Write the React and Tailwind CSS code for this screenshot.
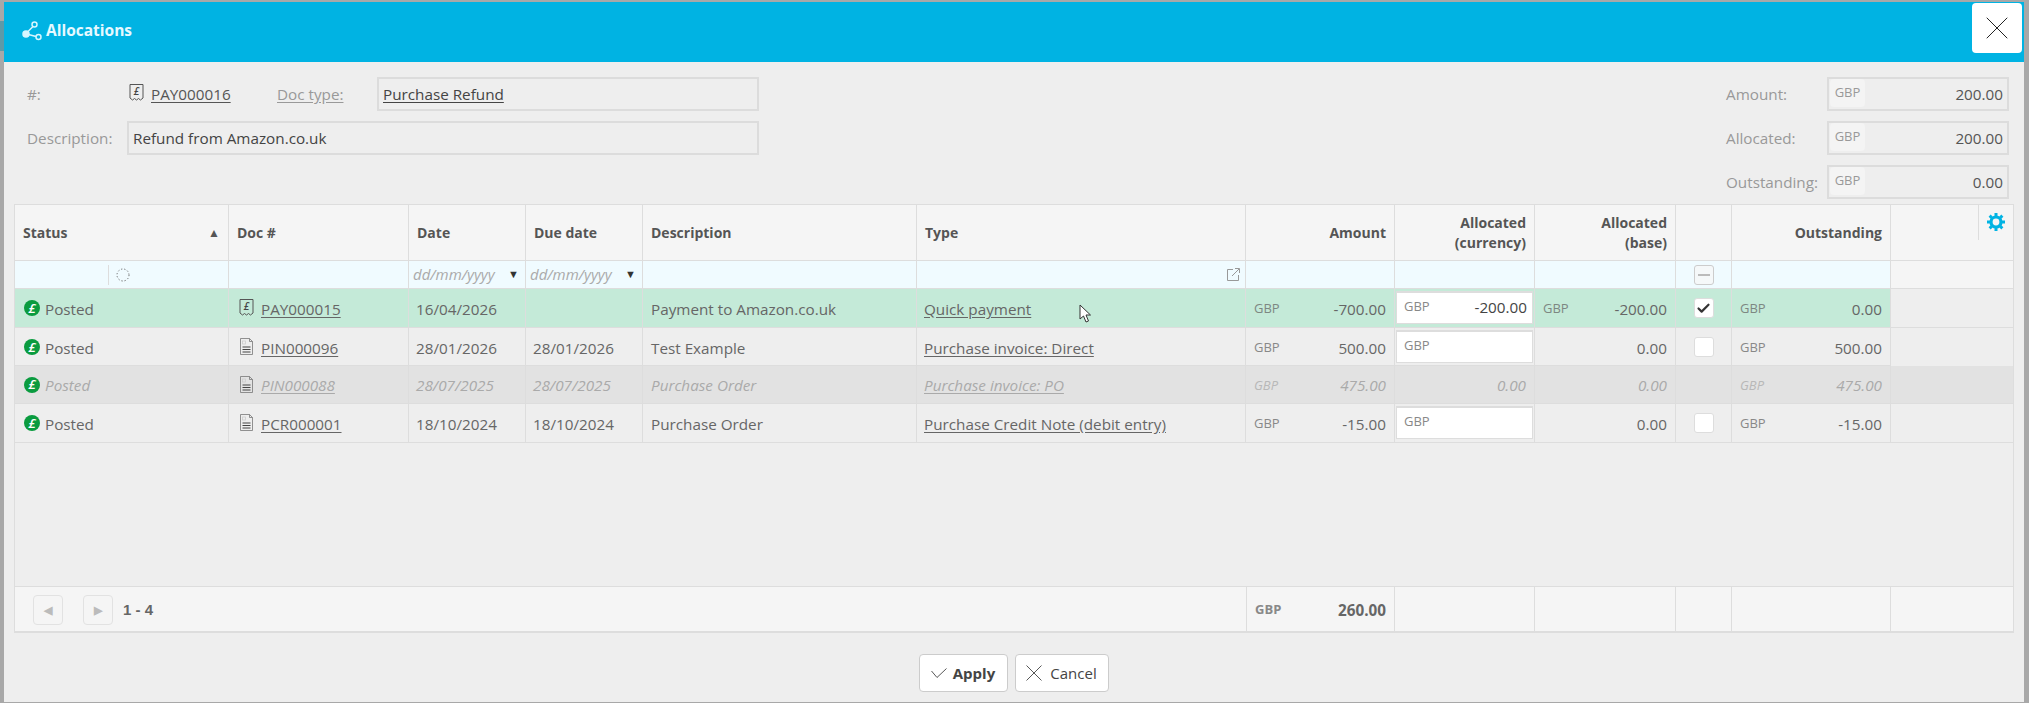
import { X, Check } from "lucide-react";

const COLS =
  "grid grid-cols-[214px_180px_117px_117px_274px_329px_149px_140px_141px_56px_159px_1fr]";

const ROWS = [
  {
    doc: "PAY000015",
    icon: "receipt",
    date: "16/04/2026",
    due: "",
    desc: "Payment to Amazon.co.uk",
    type: "Quick payment",
    amount: "-700.00",
    allocCur: "-200.00",
    allocBase: "-200.00",
    baseGbp: true,
    checked: true,
    outstanding: "0.00",
    state: "selected",
    height: "h-[39px]",
  },
  {
    doc: "PIN000096",
    icon: "doc",
    date: "28/01/2026",
    due: "28/01/2026",
    desc: "Test Example",
    type: "Purchase invoice: Direct",
    amount: "500.00",
    allocCur: "",
    allocBase: "0.00",
    outstanding: "500.00",
    height: "h-[38px]",
  },
  {
    doc: "PIN000088",
    icon: "doc",
    date: "28/07/2025",
    due: "28/07/2025",
    desc: "Purchase Order",
    type: "Purchase invoice: PO",
    amount: "475.00",
    allocCur: "0.00",
    allocBase: "0.00",
    outstanding: "475.00",
    state: "disabled",
    height: "h-[38px]",
  },
  {
    doc: "PCR000001",
    icon: "doc",
    date: "18/10/2024",
    due: "18/10/2024",
    desc: "Purchase Order",
    type: "Purchase Credit Note (debit entry)",
    amount: "-15.00",
    allocCur: "",
    allocBase: "0.00",
    outstanding: "-15.00",
    height: "h-[39px]",
  },
];

function ReceiptIcon() {
  return (
    <svg width="15" height="17" viewBox="0 0 15 17" className="shrink-0 mb-[3px]" fill="none" stroke="#555">
      <path d="M1 .5h13v13.500l-2.500 2-2-1.500-2 1.500-2-1.500-2 1.500-2.500-2z" />
      <text x="7.500" y="11" fontSize="10" fontStyle="italic" fontWeight="600" fill="#444" stroke="none" textAnchor="middle" fontFamily="Open Sans">
        £
      </text>
    </svg>
  );
}

function DocIcon() {
  return (
    <svg width="15" height="17" viewBox="0 0 15 17" className="shrink-0 mb-[3px]" fill="none" stroke="#777" strokeWidth="0.8">
      <path d="M1.500.5h9l3 3v13h-12z" />
      <path d="M10.500.5v3h3" />
      <rect x="3.500" y="3" width="3" height="3" stroke="#ccc" />
      <path d="M3.500 9h8M3.500 11.500h8M3.500 14h8" stroke="#444" strokeWidth="1" />
    </svg>
  );
}

function GearIcon() {
  const teeth = [0, 45, 90, 135];
  return (
    <svg width="18" height="18" viewBox="0 0 18 18" fill="none" stroke="#00b3e3">
      <circle cx="9" cy="9" r="5" strokeWidth="3.200" />
      {teeth.map((deg) => (
        <path key={deg} d="M9 0v18" strokeWidth="3" strokeDasharray="3 12" transform={`rotate(${deg} 9 9)`} />
      ))}
    </svg>
  );
}

function PoundBadge() {
  return (
    <span className="w-[16px] h-[16px] rounded-full bg-[#0a9b3f] text-white flex items-center justify-center text-[13px] leading-none font-semibold shrink-0 mb-[2px]">
      <span className="italic">£</span>
    </span>
  );
}

function Field({ className, children }) {
  return (
    <div className={`h-[34px] border-2 border-[#dcdcdc] flex items-center px-[4px] text-[#444] ${className}`}>
      {children}
    </div>
  );
}

function Money({ label, value }) {
  return (
    <div className="flex items-center h-[34px]">
      <span className="w-[101px] text-[#999]">{label}</span>
      <div className="w-[182px] h-[34px] border-2 border-[#dcdcdc] flex items-center justify-between pl-[1px] pr-[4px] text-[#555]">
        <span className="w-[35px] h-[28px] rounded-[4px] bg-[#f4f4f4] text-[13px] text-[#999] flex items-center justify-center mb-[2px]">
          GBP
        </span>
        {value}
      </div>
    </div>
  );
}

function Cell({ className = "", pad = "px-[8px]", children }) {
  return (
    <div className={`border-r border-[#dddddd] flex items-center min-w-0 ${pad} ${className}`}>{children}</div>
  );
}

function HeadCell({ className = "", children }) {
  return <Cell className={`font-bold text-[14px] text-[#555] leading-[20px] ${className}`}>{children}</Cell>;
}

function GbpCell({ value }) {
  return (
    <Cell className="justify-between">
      <span className="text-[13px] opacity-75">GBP</span>
      {value}
    </Cell>
  );
}

function DateFilter() {
  return (
    <Cell className="justify-between" pad="pl-[4px] pr-[6px]">
      <span className="italic text-[#aaa] text-[15px]">dd/mm/yyyy</span>
      <span className="text-[#333] text-[11px]">▼</span>
    </Cell>
  );
}

function Row({ row }) {
  const disabled = row.state === "disabled";
  const selected = row.state === "selected";
  const tone = selected
    ? "bg-[#c4ead8] text-[#666]"
    : disabled
      ? "bg-[#e2e2e2] text-[#aaa] italic"
      : "bg-[#eeeeee] text-[#666]";
  const lastBg = disabled ? "bg-[#e2e2e2]" : "bg-[#eeeeee]";

  return (
    <div className={`${COLS} ${row.height} border-b border-[#dddddd] [&>div]:pt-[2px] ${tone}`}>
      <Cell className="gap-[5px]" pad="pl-[9px]">
        <PoundBadge />
        Posted
      </Cell>
      <Cell className="gap-[7px]" pad="pl-[10px]">
        {row.icon === "receipt" ? <ReceiptIcon /> : <DocIcon />}
        <span className="underline underline-offset-2">{row.doc}</span>
      </Cell>
      <Cell pad="pl-[7px]">{row.date}</Cell>
      <Cell pad="pl-[7px]">{row.due}</Cell>
      <Cell pad="pl-[8px]">{row.desc}</Cell>
      <Cell pad="pl-[7px]">
        <span className="underline underline-offset-2">{row.type}</span>
      </Cell>
      <GbpCell value={row.amount} />
      {disabled ? (
        <Cell className="justify-end">{row.allocCur}</Cell>
      ) : (
        <Cell pad="px-[1px]">
          <div className="w-full h-[33px] bg-white border border-[#dddddd] border-t-2 flex items-center justify-between pl-[7px] pr-[5px] mb-[3px]">
            <span className="text-[13px] text-[#888] mb-[2px]">GBP</span>
            <span className="text-[#444] mb-[2px]">{row.allocCur}</span>
          </div>
        </Cell>
      )}
      {row.baseGbp ? (
        <GbpCell value={row.allocBase} />
      ) : (
        <Cell className="justify-end">{row.allocBase}</Cell>
      )}
      <Cell className="justify-center" pad="px-0">
        {!disabled && (
          <span className="w-[20px] h-[20px] mb-[2px] bg-white border border-[#dddddd] rounded-[3px] flex items-center justify-center">
            {row.checked && <Check size={15} strokeWidth={3.5} className="text-[#333]" />}
          </span>
        )}
      </Cell>
      <GbpCell value={row.outstanding} />
      <div className={lastBg} />
    </div>
  );
}

export default function App() {
  return (
    <div className="relative w-[2029px] h-[703px] bg-[#a8a8a8] pt-[2px] pl-[4px] pr-[5px] pb-[1px] text-[15.25px] [font-family:'Open_Sans',sans-serif]">
      <div className="absolute left-0 top-[21px] w-[4px] h-[30px] bg-[#5d9aa8]" />
      <div className="h-full bg-[#eeeeee] flex flex-col">
        {/* Header */}
        <div className="h-[60px] bg-[#00b3e3] flex items-start justify-between pl-[18px] pr-[2px] shrink-0">
          <div className="flex items-center gap-[4px] h-[57px] text-[#e6f9ff] font-bold text-[15.5px]">
            <svg width="20" height="20" viewBox="0 0 20 20" fill="none" stroke="#d8f6ff" strokeWidth="1.500">
              <circle cx="12.500" cy="3.500" r="2.500" />
              <circle cx="16.500" cy="16" r="2.500" />
              <circle cx="4" cy="13" r="3" fill="#d8f6ff" />
              <path d="M11 5.500l-6 6M6.500 13.500l7.500 2" />
            </svg>
            Allocations
          </div>
          <button className="w-[50px] h-[50px] mt-[1px] bg-white rounded-[4px] flex items-center justify-center">
            <X size={40} strokeWidth={0.6} className="text-[#222]" />
          </button>
        </div>

        {/* Form */}
        <div className="flex justify-between pl-[23px] pr-[15px] pt-[15px] shrink-0">
          <div className="flex flex-col gap-[10px]">
            <div className="flex items-center h-[34px]">
              <span className="w-[102px] text-[#999]">#:</span>
              <ReceiptIcon />
              <span className="ml-[7px] w-[126px] underline underline-offset-2 text-[#555]">PAY000016</span>
              <span className="w-[100px] underline underline-offset-2 text-[#999]">Doc type:</span>
              <Field className="w-[382px]">
                <span className="underline underline-offset-2">Purchase Refund</span>
              </Field>
            </div>
            <div className="flex items-center h-[34px]">
              <span className="w-[100px] text-[#999]">Description:</span>
              <Field className="w-[632px]">Refund from Amazon.co.uk</Field>
            </div>
          </div>
          <div className="flex flex-col gap-[10px]">
            <Money label="Amount:" value="200.00" />
            <Money label="Allocated:" value="200.00" />
            <Money label="Outstanding:" value="0.00" />
          </div>
        </div>

        {/* Grid */}
        <div className="mt-[5px] ml-[10px] w-[2000px] h-[429px] border border-[#dddddd] border-b-2 flex flex-col shrink-0">
          <div className={`${COLS} h-[56px] bg-[#f5f5f5] border-b border-[#dddddd]`}>
            <HeadCell className="justify-between">
              Status
              <span className="text-[#555] text-[12px]">▲</span>
            </HeadCell>
            <HeadCell>Doc #</HeadCell>
            <HeadCell>Date</HeadCell>
            <HeadCell>Due date</HeadCell>
            <HeadCell>Description</HeadCell>
            <HeadCell>Type</HeadCell>
            <HeadCell className="justify-end">Amount</HeadCell>
            <HeadCell className="justify-end text-right">
              Allocated
              <br />
              (currency)
            </HeadCell>
            <HeadCell className="justify-end text-right">
              Allocated
              <br />
              (base)
            </HeadCell>
            <HeadCell />
            <HeadCell className="justify-end">Outstanding</HeadCell>
            <div className="flex justify-end items-start">
              <div className="w-[35px] h-[35px] border-l border-[#dddddd] flex justify-center pt-[8px]">
                <GearIcon />
              </div>
            </div>
          </div>

          {/* Filter row */}
          <div className={`${COLS} h-[28px] bg-[#f0fbff] border-b border-[#dddddd]`}>
            <Cell pad="pl-[93px]" className="gap-[7px]">
              <span className="h-[20px] border-l border-[#dddddd]" />
              <svg width="14" height="14" viewBox="0 0 14 14" fill="none" stroke="#666">
                <circle cx="7" cy="7" r="6" strokeDasharray="1.200 2" />
              </svg>
            </Cell>
            <Cell />
            <DateFilter />
            <DateFilter />
            <Cell />
            <Cell className="justify-end" pad="pr-[5px]">
              <svg width="14" height="14" viewBox="0 0 14 14" fill="none" stroke="#999">
                <path d="M7 1.500H1.500v11h11V7M6 8l7-7M9 .5h4.500V5" />
              </svg>
            </Cell>
            <Cell />
            <Cell />
            <Cell />
            <Cell className="justify-center" pad="px-0">
              <span className="w-[20px] h-[20px] bg-[#f5f8f9] border border-[#cccccc] rounded-[3px] flex items-center justify-center">
                <span className="w-[12px] h-[2px] bg-[#bbbbbb]" />
              </span>
            </Cell>
            <Cell />
            <div className="bg-[#f5f5f5]" />
          </div>

          {ROWS.map((row) => (
            <Row key={row.doc} row={row} />
          ))}

          <div className="flex-1" />

          {/* Footer */}
          <div className="grid grid-cols-[1231px_149px_140px_141px_56px_159px_1fr] h-[45px] bg-[#f5f5f5] border-t border-[#dddddd] text-[#666] font-bold">
            <Cell className="gap-[20px] [font-family:'Liberation_Sans',sans-serif] text-[15px] border-r-0" pad="pl-[18px] pt-[2px]">
              <button className="w-[30px] h-[30px] border border-[#e2e2e2] rounded-[4px] text-[#bbb] text-[11px] flex items-center justify-center">
                ◀
              </button>
              <button className="w-[30px] h-[30px] border border-[#e2e2e2] rounded-[4px] text-[#bbb] text-[11px] flex items-center justify-center">
                ▶
              </button>
              <span className="-ml-[10px]">1 - 4</span>
            </Cell>
            <Cell className="justify-between border-l" pad="px-[8px] pt-[2px]">
              <span className="text-[13px] text-[#888]">GBP</span>
              260.00
            </Cell>
            <Cell />
            <Cell />
            <Cell />
            <Cell />
            <div />
          </div>
        </div>

        {/* Actions */}
        <div className="flex justify-center gap-[7px] mt-[21px] pr-[1px] text-[15px] text-[#444]">
          <button className="w-[89px] h-[38px] bg-white border border-[#cccccc] rounded-[4px] flex items-center justify-center gap-[6px] font-bold">
            <svg width="16" height="10" viewBox="0 0 16 10" fill="none" stroke="#444" strokeWidth="0.9">
              <path d="M.5 3l5.500 6.500 9.500-9" />
            </svg>
            Apply
          </button>
          <button className="w-[94px] h-[38px] bg-white border border-[#cccccc] rounded-[4px] flex items-center justify-center gap-[8px]">
            <svg width="16" height="16" viewBox="0 0 16 16" fill="none" stroke="#444" strokeWidth="0.9">
              <path d="M.5.5l15 15M15.500.5l-15 15" />
            </svg>
            Cancel
          </button>
        </div>
      </div>

      {/* Mouse pointer */}
      <svg width="13" height="20" viewBox="0 0 13 20" className="absolute left-[1079px] top-[304px]" fill="#fff" stroke="#333">
        <path d="M1 1v14l3.500-3 2.500 6 2.500-1-2.500-6h4.500z" />
      </svg>
    </div>
  );
}
